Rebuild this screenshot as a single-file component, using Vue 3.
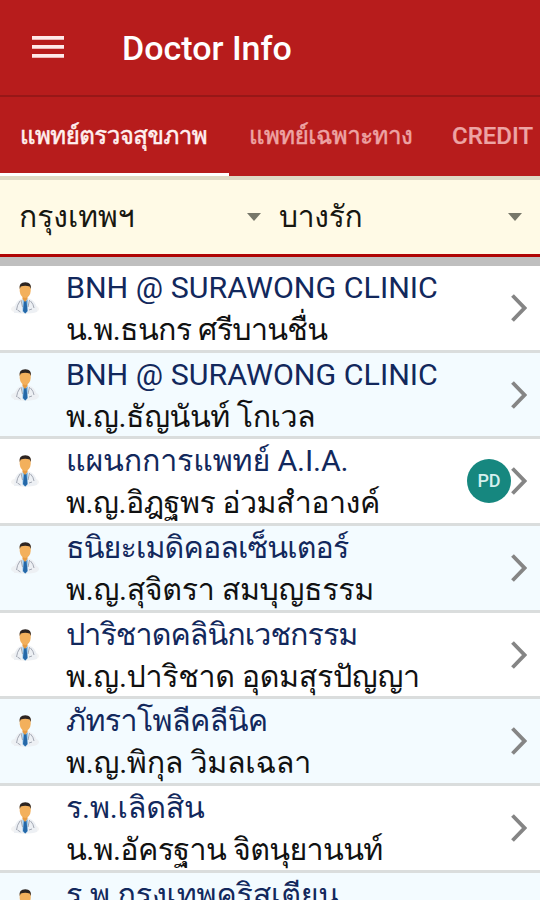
<script setup>
const rows = [
  { clinic: 'BNH @ SURAWONG CLINIC', doctor: 'น.พ.ธนกร ศรีบานชื่น', ct: 0, dt: -0.7 },
  { clinic: 'BNH @ SURAWONG CLINIC', doctor: 'พ.ญ.ธัญนันท์ โกเวล', ct: 0, dt: -0.47 },
  { clinic: 'แผนกการแพทย์ A.I.A.', doctor: 'พ.ญ.อิฎฐพร อ่วมสำอางค์', badge: 'PD', ct: -0.16, dt: -0.5 },
  { clinic: 'ธนิยะเมดิคอลเซ็นเตอร์', doctor: 'พ.ญ.สุจิตรา สมบุญธรรม', ct: -0.88, dt: -0.33 },
  { clinic: 'ปาริชาดคลินิกเวชกรรม', doctor: 'พ.ญ.ปาริชาด อุดมสุรปัญญา', ct: -0.94, dt: -0.35 },
  { clinic: 'ภัทราโพลีคลีนิค', doctor: 'พ.ญ.พิกุล วิมลเฉลา', ct: -0.64, dt: -0.27 },
  { clinic: 'ร.พ.เลิดสิน', doctor: 'น.พ.อัครฐาน จิตนุยานนท์', ct: -0.2, dt: -0.63 },
  { clinic: 'ร.พ.กรุงเทพคริสเตียน', doctor: '', ct: -0.2, dt: 0 },
]
</script>

<template>
  <div class="screen">
    <header class="bar">
      <svg class="menu" width="32" height="24" viewBox="0 0 32 24">
        <path d="M0 1h32v3.8H0zM0 10h32v3.8H0zM0 19h32v3.8H0z" fill="#ffe9e9" />
      </svg>
      <h1>Doctor Info</h1>
    </header>
    <nav class="tabs">
      <div class="tab active"><span>แพทย์ตรวจสุขภาพ</span></div>
      <div class="tab"><span>แพทย์เฉพาะทาง</span></div>
      <div class="tab credit"><span>CREDIT</span></div>
    </nav>
    <div class="filters">
      <div class="select first"><span>กรุงเทพฯ</span><i class="caret"></i></div>
      <div class="select second"><span>บางรัก</span><i class="caret"></i></div>
    </div>
    <div class="list">
      <div v-for="(r, i) in rows" :key="i" class="row">
        <svg class="doc" width="30" height="34" viewBox="0 0 30 34">
          <ellipse cx="15" cy="28" rx="14" ry="5" fill="#e4e4e4" opacity=".4" />
          <path d="M4 32Q4 22 9 19L13 17h5l4 2q5 3 5 12l-5 1H8z" fill="#edf0f4" />
          <path d="M12.500 18.500h5.500l-.5 12-2.500 2-2.500-2z" fill="#8fc3ea" />
          <path d="M14 20h2.500l1 10-2.200 2.500L13 30z" fill="#2568a8" />
          <path d="M10 20q-3 4-3.500 9M20.500 20q3 3 3.500 7M7.500 29l3 2M22 28l-3 1M11 19l1.500 7M19.500 19l-1.500 7" fill="none" stroke="#a4a9b4" stroke-width="1" />
          <path d="M12.500 14h5v4l-2.500 3-2.500-3z" fill="#e79b43" />
          <path d="M9.700 6q0-3 5.500-3t5.500 3v4q-.5 6-5.500 7-5-1-5.500-7z" fill="#f3b05c" />
          <path d="M9.700 8Q8.500 1.500 15.300 1.300 22 1.500 20.700 8l-1-2.500q-4.500-1.300-9 0z" fill="#2d2421" />
        </svg>
        <div class="texts">
          <div class="clinic" :style="{ letterSpacing: r.ct + 'px' }">{{ r.clinic }}</div>
          <div class="doctor" :style="{ letterSpacing: r.dt + 'px' }">{{ r.doctor }}</div>
        </div>
        <span v-if="r.badge" class="badge">{{ r.badge }}</span>
        <svg class="chev" width="16" height="30" viewBox="0 0 16 30">
          <path d="M1.500 2.500L13.500 15 1.500 27.500" fill="none" stroke="#858585" stroke-width="3.800" />
        </svg>
      </div>
    </div>
  </div>
</template>

<style>
body { margin: 0; overflow: hidden; }
</style>
<style scoped>
.screen { width: 540px; height: 900px; overflow: hidden; background: #fff; font-family: Roboto, Loma, Waree, sans-serif; display: flex; flex-direction: column; }
.bar { flex: none; height: 97px; box-sizing: border-box; background: #b71c1c; display: flex; align-items: center; padding: 0 0 1px 32px; border-bottom: 2px solid #971717; }
h1 { margin: 2px 0 0 58px; font-size: 34px; line-height: 40px; font-weight: 500; color: #fff; white-space: nowrap; }
.tabs { flex: none; height: 79px; background: #b71c1c; display: flex; overflow: hidden; }
.tab { box-sizing: border-box; flex: none; padding: 0 20px; height: 79px; color: #eda4a4; font-size: 24px; font-weight: 500; line-height: 79px; white-space: nowrap; width: 203px; letter-spacing: -0.48px; -webkit-text-stroke: 0.5px currentColor; }
.active { width: 229px; color: #fff0f0; border-bottom: 3px solid #fff; }
.credit { width: 120px; letter-spacing: 0; -webkit-text-stroke: 0.2px currentColor; }
.filters { flex: none; height: 81px; box-sizing: border-box; display: flex; background: #fffae6; border-top: 4px solid #dfd9c5; border-bottom: 3px solid #b00505; font-size: 30px; color: #171710; }
.select { display: flex; align-items: center; justify-content: space-between; box-sizing: border-box; height: 74px; white-space: nowrap; }
.select span { padding-bottom: 2px; }
.first { width: 261px; padding-left: 19px; }
.second { width: 261px; padding-left: 18px; letter-spacing: -0.3px; }
.caret { border: 7.500px solid transparent; border-top: 8px solid #77776a; border-bottom: 0; }
.list { border-top: 9px solid #bfbfbf; }
.row { height: 86.670px; box-sizing: border-box; border-bottom: 3px solid #dadddd; display: flex; align-items: flex-start; padding-right: 13px; }
.row:nth-child(even) { background: #f3fbff; }
.doc { flex: none; margin: 15px 0 0 10px; }
.texts { flex: 1; margin-left: 26px; white-space: nowrap; font-size: 30.400px; line-height: 42px; padding-top: 1px; }
.clinic { color: #12285c; }
.doctor { color: #111; }
.badge { width: 44px; height: 44px; border-radius: 50%; background: #16877f; color: #d5f0ee; font-size: 18px; font-weight: 500; line-height: 44px; text-align: center; margin-top: 20px; }
.chev { flex: none; margin-top: 27px; }
</style>
